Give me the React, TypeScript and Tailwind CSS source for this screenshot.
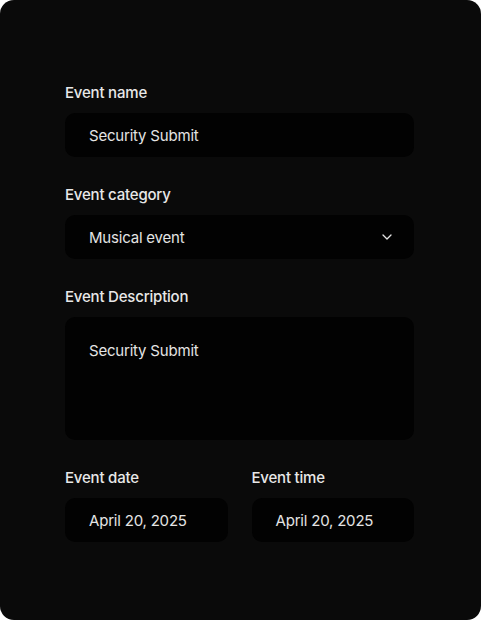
import React from 'react';

const font = { fontFamily: 'Inter, "Noto Sans", sans-serif' };

function Label({ children }: { children: React.ReactNode }) {
  return (
    <div className="text-[15px] leading-[20px] font-medium text-[#e8e8e8] mb-[10px] tracking-[-0.2px]">
      {children}
    </div>
  );
}

function Field({ children, className = '' }: { children: React.ReactNode; className?: string }) {
  return (
    <div className={`bg-[#020202] rounded-[10px] px-6 text-[15px] text-[#e4e4e4] tracking-[-0.2px] ${className}`}>
      {children}
    </div>
  );
}

export default function App() {
  return (
    <div className="bg-white w-[481px] h-[620px]" style={font}>
      <div className="bg-[#0a0a0a] rounded-[14px] h-[620px] pt-[83px] pl-[65px] pr-[67px]">
        <div>
          <Label>Event name</Label>
          <Field className="h-[44px] flex items-center pt-[3px]">Security Submit</Field>
        </div>

        <div className="mt-[28px]">
          <Label>Event category</Label>
          <Field className="h-[44px] flex items-center justify-between pr-[22px] pt-[3px]">
            <span>Musical event</span>
            <svg width="10" height="6" viewBox="0 0 10 6" fill="none" className="-mt-[3px]">
              <path d="M1 1l4 4 4-4" stroke="#e4e4e4" strokeWidth="1.3" strokeLinecap="round" strokeLinejoin="round" />
            </svg>
          </Field>
        </div>

        <div className="mt-[28px]">
          <Label>Event Description</Label>
          <Field className="h-[123px] pt-[24px] leading-[20px]">Security Submit</Field>
        </div>

        <div className="mt-[28px] grid grid-cols-2 gap-6">
          <div>
            <Label>Event date</Label>
            <Field className="h-[44px] flex items-center pt-[3px]">April 20, 2025</Field>
          </div>
          <div>
            <Label>Event time</Label>
            <Field className="h-[44px] flex items-center pt-[3px]">April 20, 2025</Field>
          </div>
        </div>
      </div>
    </div>
  );
}
